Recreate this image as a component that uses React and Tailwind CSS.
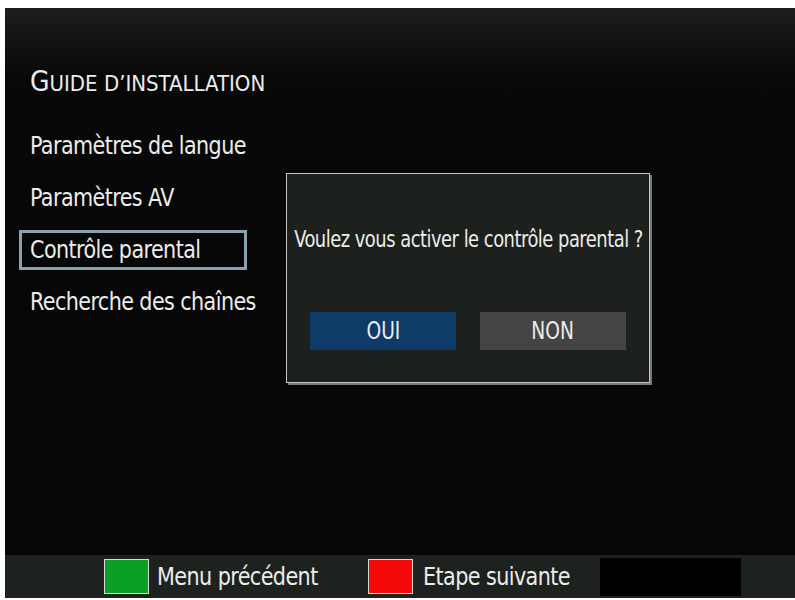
import React from 'react';

const menu = ['Paramètres de langue', 'Paramètres AV', 'Contrôle parental', 'Recherche des chaînes'];

const App = () => {
  const font = { fontFamily: '"DejaVu Sans Condensed", "DejaVu Sans", sans-serif' };

  return (
    <div className="w-[795px] h-[600px] bg-white overflow-hidden" style={font}>
      <div className="ml-[5px] mt-[8px] w-[790px] h-[590px] flex flex-col bg-gradient-to-b from-[#1c1d1c] via-[#070807] via-[12%] to-[#050605]">

        {/* Main area */}
        <div className="relative flex-1">
          <h1 className="pl-[25px] pt-[60px] text-[#ececec] leading-none whitespace-nowrap">
            <span className="text-[28px]">G</span>
            <span className="text-[22px]">UIDE D’INSTALLATION</span>
          </h1>

          <div className="mt-[30px] pl-[14px] flex flex-col gap-[12px]">
            {menu.map((item, i) => (
              <div
                key={item}
                className={
                  'w-[228px] h-[40px] pl-[8px] flex items-center text-[25px] text-[#ececec] tracking-tight whitespace-nowrap border-[3px] ' +
                  (i === 2 ? 'border-[#8aa2ab]' : 'border-transparent')
                }
              >
                <span className="inline-block origin-left scale-x-[0.92]">{item}</span>
              </div>
            ))}
          </div>

          {/* Dialog */}
          <div className="absolute left-[281px] top-[165px] w-[364px] h-[210px] bg-[#1c211d] border border-[#c4c4c4] shadow-[2px_2px_0_#7a7a7a] flex flex-col items-center">
            <p className="mt-[54px] text-[23px] leading-none text-[#ececec] tracking-tight whitespace-nowrap scale-x-[0.865]">
              Voulez vous activer le contrôle parental ?
            </p>
            <div className="mt-[61px] flex gap-[24px]">
              <div className="w-[146px] h-[38px] bg-[#0f3b69] flex items-center justify-center text-[25px] text-[#ececec]">
                <span className="inline-block scale-x-[0.83]">OUI</span>
              </div>
              <div className="w-[146px] h-[38px] bg-[#444444] flex items-center justify-center text-[25px] text-[#ececec]">
                <span className="inline-block scale-x-[0.83]">NON</span>
              </div>
            </div>
          </div>
        </div>

        {/* Footer */}
        <div className="h-[43px] bg-[#1e221e] flex items-center pl-[99px]">
          <div className="w-[45px] h-[35px] bg-[#07a025] border border-[#d8d8d8]" />
          <div className="ml-[8px] w-[211px] text-[24px] text-[#ececec] tracking-tight whitespace-nowrap">
            <span className="inline-block origin-left scale-x-[0.96]">Menu précédent</span>
          </div>
          <div className="w-[45px] h-[35px] bg-[#f50a0a] border border-[#d8d8d8]" />
          <div className="ml-[10px] w-[177px] text-[24px] text-[#ececec] tracking-tight whitespace-nowrap">
            <span className="inline-block origin-left scale-x-[0.96]">Etape suivante</span>
          </div>
          <div className="w-[141px] h-[38px] bg-black" />
        </div>
      </div>
    </div>
  );
};

export default App;
